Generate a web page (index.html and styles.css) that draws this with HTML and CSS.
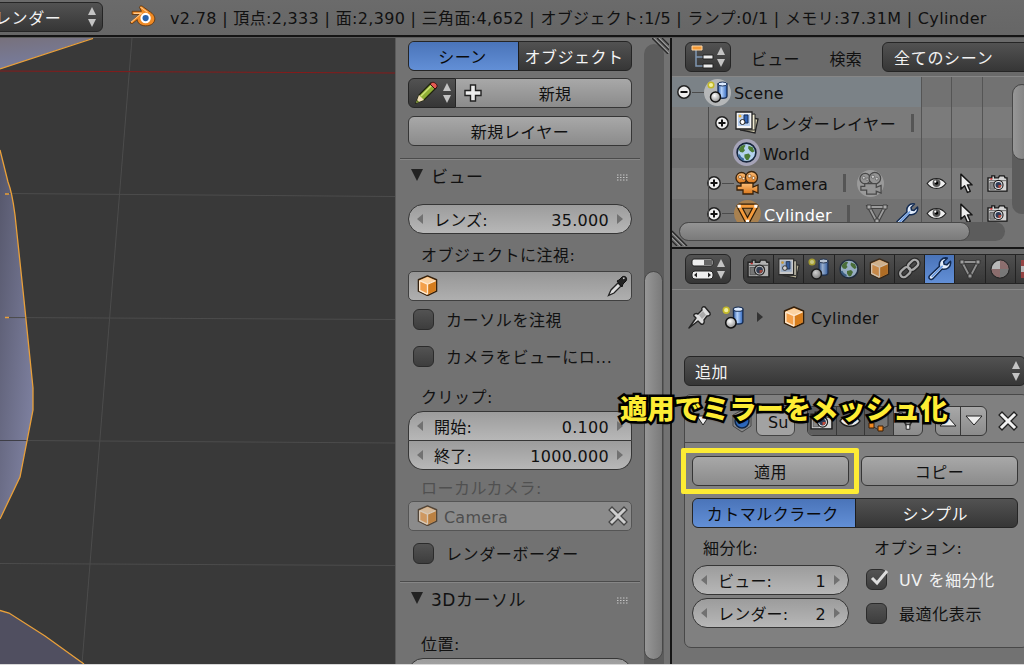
FILE: index.html
```
<!doctype html>
<html lang="ja">
  <head>
    <meta charset="UTF-8" />
    <meta name="viewport" content="width=device-width, initial-scale=1.0" />
    <title>Blender</title>
    <link rel="stylesheet" href="styles.css">
  </head>
  <body>
    <svg class="defs" width="0" height="0">
      <defs>
        <linearGradient id="g-blue" x1="0" x2="1"><stop offset="0" stop-color="#2f5da8" /><stop offset=".4" stop-color="#b4d2fb" /><stop offset="1" stop-color="#2f66bd" /></linearGradient>
        <radialGradient id="g-ball" cx=".4" cy=".35" r=".7"><stop offset="0" stop-color="#fff" /><stop offset="1" stop-color="#8a8a8a" /></radialGradient>
        <linearGradient id="g-orange" x1="0" y1="0" x2="0" y2="1"><stop offset="0" stop-color="#ffc079" /><stop offset="1" stop-color="#d9761a" /></linearGradient>
        <linearGradient id="g-mesh" x1="0" y1="0" x2="1" y2="1"><stop offset="0" stop-color="#55566a" /><stop offset="1" stop-color="#8487a8" /></linearGradient>
        <linearGradient id="g-mesh-top" x1="0" y1="0" x2=".3" y2="1"><stop offset="0" stop-color="#77717c" /><stop offset="1" stop-color="#777da0" /></linearGradient>
      </defs>
      <symbol id="updown" viewBox="0 0 10 20">
        <path d="M5 0 9 8H1zM5 20 1 12h8z" fill="#c4c4c4" />
      </symbol>
      <symbol id="cube" viewBox="0 0 22 22">
        <path d="M11 1 20.500 5v12L11 21.500 1.500 17V5z" fill="#f3a04b" stroke="#33200d" stroke-width="1.500" stroke-linejoin="round" />
        <path d="M11 2.200 19.500 5.700 11 9.500 2.500 5.700z" fill="#fbd3a3" />
        <path d="M11 9.500 19.500 5.700v10.700L11 20.400z" fill="#d57c1c" />
        <path d="M2.800 6 11 9.700V20M11 9.700l8.400-3.800M2.800 6v10.200L11 20.200" fill="none" stroke="#ffe9cf" stroke-width="1.400" />
      </symbol>
      <symbol id="scene" viewBox="0 0 24 24">
        <path d="M12 4v12c0 3 9 3 9 0V4z" fill="url(#g-blue)" stroke="#162c52" stroke-width="1.300" />
        <ellipse cx="16.500" cy="4" rx="4.500" ry="2" fill="#dcebff" stroke="#162c52" />
        <circle cx="9.500" cy="17" r="5" fill="url(#g-ball)" stroke="#111" stroke-width="1.500" />
        <circle cx="5" cy="5" r="2.800" fill="#f2f09a" stroke="#c3b82a" stroke-width="1.500" />
      </symbol>
      <symbol id="layers" viewBox="0 0 26 26">
        <path d="m10 6 14 3-3 14-14-3z" fill="#d9d2b0" stroke="#222" stroke-width="1.300" />
        <path d="m6 5 15-1v16H6z" fill="#eee9cf" stroke="#222" />
        <path d="M2 2h16v17H2z" fill="#f5f5f5" stroke="#222" stroke-width="1.300" />
        <path d="M4 4h12v12H4z" fill="#b9d0f0" />
        <path d="M10 5h4v8h-4z" fill="#2e62b5" stroke="#162c52" />
        <circle cx="8.500" cy="12" r="2.500" fill="#fff" stroke="#222" />
        <circle cx="6" cy="6" r="1.500" fill="#f0b43a" />
      </symbol>
      <symbol id="world" viewBox="0 0 24 24">
        <circle cx="12" cy="12" r="9" fill="#b4d2ee" stroke="#17263c" stroke-width="1.600" />
        <path d="M4.500 9c2-4 6-5 6.500-3.500L9.500 8l1 2-2 2-2.500-.5zM14 5.500l4 1.500 1.500 4-2 1-2.500-2-1.500-2zM10 14l4-1 2 2-2 4-2 .5-2-3z" fill="#4b7b35" />
        <path d="M4.500 14a8 8 0 0 0 5 5" fill="none" stroke="#3b6898" stroke-width="2" />
      </symbol>
      <symbol id="movie" viewBox="0 0 26 26">
        <g stroke="#38220c" stroke-width="1.300" fill="url(#g-orange)">
          <circle cx="7.500" cy="8" r="5.500" /><circle cx="17.500" cy="7.500" r="6" />
          <path d="M7 13h12v4l5-2v8l-5-2v3H9v-4H3v-4h4z" />
        </g>
        <g fill="#fff0dd" stroke="#7a4a1a" stroke-width=".7"><circle cx="6" cy="7" r="1.500" /><circle cx="9.500" cy="8.500" r="1.300" /><circle cx="15.500" cy="6" r="1.700" /><circle cx="19.500" cy="8" r="1.500" /></g>
      </symbol>
      <symbol id="movie-data" viewBox="0 0 26 26">
        <g stroke="#484848" stroke-width="1.300" fill="#949494">
          <circle cx="7.500" cy="8" r="5.500" /><circle cx="17.500" cy="7.500" r="6" />
          <path d="M7 13h12v4l5-2v8l-5-2v3H9v-4H3v-4h4z" />
        </g>
        <g fill="#ccc" stroke="#555" stroke-width=".7"><circle cx="6" cy="7" r="1.500" /><circle cx="9.500" cy="8.500" r="1.300" /><circle cx="15.500" cy="6" r="1.700" /><circle cx="19.500" cy="8" r="1.500" /></g>
      </symbol>
      <symbol id="tri-mesh" viewBox="0 0 24 24">
        <path d="M4 5h16l-8 15z" fill="none" stroke="#2a1a08" stroke-width="5" stroke-linejoin="round" />
        <path d="M4 5h16l-8 15z" fill="none" stroke="#f49a3a" stroke-width="2.800" />
        <path d="M2.500 3.500h3v3h-3zM18.500 3.500h3v3h-3zM10.500 18h3v3h-3z" fill="#fff" />
      </symbol>
      <symbol id="tri-data" viewBox="0 0 24 24">
        <path d="M4 5h16l-8 15z" fill="none" stroke="#333" stroke-width="4" />
        <path d="M4 5h16l-8 15z" fill="none" stroke="#aaa" stroke-width="1.800" />
        <g fill="#bbb" stroke="#333"><path d="M2 3h4v4H2zM18 3h4v4h-4zM10 17h4v4h-4z" /></g>
      </symbol>
      <symbol id="wrench" viewBox="0 0 24 24">
        <path d="M2.500 19 12 10C11 5 14.500 1 19.500 2L16 5.500l.5 2.500 2.500.5L22.500 5c1 5-3 8.500-8 7.500L5.500 22c-2 1.500-5-1-3-3z" fill="#e4eefc" stroke="#132b52" stroke-width="1.500" stroke-linejoin="round" />
        <path d="M4.500 20 15 9.500" stroke="#6a9be4" stroke-width="1.600" />
      </symbol>
      <symbol id="eye" viewBox="0 0 22 16">
        <path d="M1 8C6 1 16 1 21 8c-5 7-15 7-20 0z" fill="#eee" stroke="#222" stroke-width="1.300" />
        <circle cx="11" cy="7.500" r="4.200" fill="#555" /><circle cx="11" cy="7.500" r="1.900" fill="#000" /><circle cx="9.700" cy="6" r="1.200" fill="#fff" />
      </symbol>
      <symbol id="cursor" viewBox="0 0 16 22">
        <path d="M2 1v16l4-3.500L9 20.500l3-1.200-3-6.800h5z" fill="#ededed" stroke="#151515" stroke-width="1.500" stroke-linejoin="round" />
      </symbol>
      <symbol id="camera" viewBox="0 0 22 20">
        <path d="M1 4h4V2h3v2h4l1-2h5l1 2h2v14H1z" fill="#d5d5d5" stroke="#1a1a1a" stroke-width="1.400" />
        <path d="M2 7h18M3 9h5v7H3z" fill="#888" stroke="#666" />
        <circle cx="12" cy="11.500" r="4.800" fill="#eee" stroke="#1a1a1a" stroke-width="1.200" />
        <circle cx="12" cy="11.500" r="3.200" fill="#2e3b55" /><path d="M12 11.500h3a3 3 0 0 1-3 3z" fill="#c14a3b" />
        <path d="M3.500 5.200h2" stroke="#d22" stroke-width="1.500" />
      </symbol>
      <symbol id="chain" viewBox="0 0 24 24">
        <g fill="none" stroke="#222" stroke-width="4.600"><rect x="10" y="5" width="11" height="7" rx="3.500" transform="rotate(-42 15.500 8.500)" /><rect x="2.500" y="12" width="11" height="7" rx="3.500" transform="rotate(-42 8 15.500)" /></g>
        <g fill="none" stroke="#ccc" stroke-width="2.200"><rect x="10" y="5" width="11" height="7" rx="3.500" transform="rotate(-42 15.500 8.500)" /><rect x="2.500" y="12" width="11" height="7" rx="3.500" transform="rotate(-42 8 15.500)" /></g>
      </symbol>
      <symbol id="material" viewBox="0 0 24 24">
        <circle cx="12" cy="12" r="9" fill="#ddd" stroke="#222" stroke-width="1.400" />
        <path d="M12 12V3.500a8.500 8.500 0 0 1 8.500 8.500zM12 12v8.500A8.500 8.500 0 0 1 3.500 12z" fill="#a47c7c" />
        <path d="M12 12h8.500a8.500 8.500 0 0 1-8.500 8.500z" fill="#8a8a8a" />
      </symbol>
      <symbol id="cross" viewBox="0 0 20 20">
        <path d="m4 4 12 12M16 4 4 16" stroke="#222" stroke-width="5.500" stroke-linecap="square" />
        <path d="m4 4 12 12M16 4 4 16" stroke="#f2f2f2" stroke-width="3" stroke-linecap="square" />
      </symbol>
      <symbol id="expand" viewBox="0 0 16 16">
        <circle cx="8" cy="8" r="6.200" fill="#eee" stroke="#222" stroke-width="1.500" />
        <path d="M4.500 8h7M8 4.500v7" stroke="#111" stroke-width="2" />
      </symbol>
      <symbol id="grip" viewBox="0 0 17 16">
        <path d="M0 0 16 16M5 0l12 12M10 0l7 7" stroke="#282828" stroke-width="1.300" />
        <path d="m2 0 15 15M7 0l10 10" stroke="#999" />
      </symbol>
      <symbol id="dots" viewBox="0 0 12 7">
        <path d="M0 1h12M0 3.500h12M0 6h12" stroke="#c5c5c5" stroke-width="1" stroke-dasharray="1.500 1.500" />
      </symbol>
    </svg>

    <div class="window">
      <header class="topbar">
        <div class="engine dark">
          <span>レンダー</span>
          <svg class="updown"><use href="#updown" /></svg>
        </div>
        <svg class="logo" viewBox="0 0 26 22">
          <path d="M1 17 10 9H3V6h9l-2-4c1-2 3-1 4 0l7 5c7 5 4 13-5 13-5 0-8-3-8-6l-5 4z" fill="#f08a24" stroke="#5b320c" stroke-width=".8" />
          <path d="M2 16.500 12 8H4.500M11 2l7 5" fill="none" stroke="#ffc98b" />
          <circle cx="16" cy="12.500" r="5" fill="#fff" /><circle cx="16" cy="12.500" r="3" fill="#2861ab" />
        </svg>
        <span class="stats">v2.78 | 頂点:2,333 | 面:2,390 | 三角面:4,652 | オブジェクト:1/5 | ランプ:0/1 | メモリ:37.31M | Cylinder</span>
      </header>

      <main class="areas">
        <svg class="viewport" viewBox="0 38 395 626">
          <path d="M0 38h93L0 69z" fill="url(#g-mesh-top)" />
          <path d="M0 150 8 182Q12 192 15 215L24 300 33 388V410L20 477 0 519z" fill="url(#g-mesh)" />
          <path d="M0 610.500 9 613 45 636 84 664H0z" fill="#504f60" />
          <g fill="none" stroke="#4c4c4c">
            <path d="M132 38 82 664M7 193.500 395 196.500M5 317.500 395 319.500M24 440.500 395 443M0 563.500 395 565.500" />
            <path d="M0 440.500H28" stroke="#3e3e46" />
          </g>
          <path d="M0 71 395 73" stroke="#861b1b" />
          <path d="M93 38.500 0 69M0 150 8 182Q12 192 15 215L24 300 33 388V410L20 477 0 519M0 610.500 9 613 45 636 84 664M5 317.500h4M5 194h4" fill="none" stroke="#e9a03a" stroke-width="1.300" />
        </svg>

        <aside class="sidebar">
          <div class="panels">
            <div class="seg">
              <span class="on seg-scene">シーン</span>
              <span class="seg-object">オブジェクト</span>
            </div>
            <div class="btn-row">
              <span class="pencil dark">
                <svg width="26" height="26" viewBox="0 0 26 26">
                  <path d="M3 23 6 15 18 3l5 5L11 20z" fill="#8fae35" stroke="#20240e" stroke-width="1.300" />
                  <path d="m3 23 3-8 5 5z" fill="#f0dfb6" /><path d="m3 23 1.200-3 2 2z" fill="#5c7a18" />
                  <path d="m8 16 11-11" stroke="#cfe276" stroke-width="1.500" />
                  <path d="m17 4 2-1.500c2-1 6 2 5 4.500l-2 2z" fill="#e55b52" stroke="#3a1010" />
                </svg>
                <svg class="updown"><use href="#updown" /></svg>
              </span>
              <span class="new light">
                <svg width="20" height="20" viewBox="0 0 20 20"><path d="M7.500 2h5v5.500H18v5h-5.500V18h-5v-5.500H2v-5h5.500z" fill="#eee" stroke="#222" stroke-width="1.400" /></svg>
                <span>新規</span>
              </span>
            </div>
            <div class="btn light">新規レイヤー</div>

            <div class="panel-head first"><i></i><h2>ビュー</h2><svg><use href="#dots" /></svg></div>
            <div class="num lens"><span>レンズ:</span><b>35.000</b></div>
            <div class="label">オブジェクトに注視:</div>
            <div class="field">
              <svg width="21" height="21"><use href="#cube" /></svg>
              <span></span>
              <svg width="21" height="22" viewBox="0 0 21 22">
                <path d="M1.500 20.500 4 15 11 8l3 3-7 7z" fill="#ddd" stroke="#222" stroke-width="1.300" />
                <path d="m10 6 2-1 3-3c3-2 6 1 4 4l-3 3-1 3z" fill="#222" stroke="#111" /><path d="m16 3.500 1.500-.5" stroke="#ccc" stroke-width="1.500" />
              </svg>
            </div>
            <div class="check c1"><i></i>カーソルを注視</div>
            <div class="check c2"><i></i>カメラをビューにロ...</div>
            <div class="label clip">クリップ:</div>
            <div class="num top"><span>開始:</span><b>0.100</b></div>
            <div class="num bottom"><span>終了:</span><b>1000.000</b></div>
            <div class="label local">ローカルカメラ:</div>
            <div class="field disabled">
              <svg width="21" height="21"><use href="#cube" /></svg>
              <span>Camera</span>
              <svg width="20" height="20"><use href="#cross" /></svg>
            </div>
            <div class="check c3"><i></i>レンダーボーダー</div>

            <div class="panel-head second"><i></i><h2>3Dカーソル</h2><svg><use href="#dots" /></svg></div>
            <div class="label pos">位置:</div>
            <div class="num cut"></div>
          </div>
          <div class="vscroll"><div class="vthumb"></div></div>
          <svg class="grip"><use href="#grip" /></svg>
        </aside>

        <div class="editors">
          <section class="outliner">
            <div class="out-head">
              <span class="editor-type dark">
                <svg width="24" height="24" viewBox="0 0 24 24">
                  <path d="M5 4v17h7M5 12h7" fill="none" stroke="#7f97b3" stroke-width="1.500" />
                  <path d="M1 1h10v4H1z" fill="#f49b38" stroke="#ffd7a6" /><path d="M12 10h10v4H12zM12 19h10v4H12z" fill="#eee" stroke="#222" />
                </svg>
                <svg class="updown"><use href="#updown" /></svg>
              </span>
              <span class="menu-view">ビュー</span>
              <span class="menu-search">検索</span>
              <span class="display dark">全てのシーン</span>
            </div>
            <div class="tree-wrap">
              <div class="tree">
                <div class="row sel">
                  <div class="name n0">
                    <svg width="16" height="16" viewBox="0 0 16 16"><circle cx="8" cy="8" r="6.200" fill="#eee" stroke="#222" stroke-width="1.500" /><path d="M4.500 8h7" stroke="#111" stroke-width="2" /></svg>
                    <hr /><span class="disc pale"><svg width="24" height="24"><use href="#scene" /></svg></span><span class="nm">Scene</span>
                  </div>
                  <i></i><i></i><i></i>
                </div>
                <div class="row alt">
                  <div class="name n1">
                    <svg width="16" height="16"><use href="#expand" /></svg>
                    <svg class="lay" width="26" height="26"><use href="#layers" /></svg><span class="nm wide">レンダーレイヤー</span><em></em>
                  </div>
                  <i></i><i></i><i></i>
                </div>
                <div class="row">
                  <div class="name n2">
                    <span class="disc lilac"><svg width="25" height="25"><use href="#world" /></svg></span><span class="nm">World</span>
                  </div>
                  <i></i><i></i><i></i>
                </div>
                <div class="row alt">
                  <div class="name n3">
                    <svg width="16" height="16"><use href="#expand" /></svg>
                    <hr /><svg class="obj" width="26" height="26"><use href="#movie" /></svg><span class="nm">Camera</span><em></em>
                    <span class="disc gray"><svg width="25" height="25"><use href="#movie-data" /></svg></span>
                  </div>
                  <i><svg width="21" height="15"><use href="#eye" /></svg></i><i><svg width="15" height="21"><use href="#cursor" /></svg></i><i><svg width="21" height="19"><use href="#camera" /></svg></i>
                </div>
                <div class="row last">
                  <div class="name n3">
                    <svg width="16" height="16"><use href="#expand" /></svg>
                    <hr /><span class="disc amber"><svg width="25" height="25"><use href="#tri-mesh" /></svg></span><span class="nm active">Cylinder</span><em></em>
                    <svg class="data" width="24" height="24"><use href="#tri-data" /></svg><svg class="mod" width="24" height="24"><use href="#wrench" /></svg>
                  </div>
                  <i><svg width="21" height="15"><use href="#eye" /></svg></i><i><svg width="15" height="21"><use href="#cursor" /></svg></i><i><svg width="21" height="19"><use href="#camera" /></svg></i>
                </div>
              </div>
              <div class="out-vscroll"><div></div></div>
            </div>
            <div class="hscroll"><div></div></div>
            <svg class="grip-left" viewBox="0 0 17 20"><path d="m0 5 15 15M0 10l10 10M0 15l5 5" stroke="#282828" stroke-width="1.300" /><path d="m0 7 13 13M0 12l8 8" stroke="#999" /></svg>
          </section>

          <section class="props">
            <div class="props-head">
              <span class="editor-type dark">
                <svg width="24" height="24" viewBox="0 0 24 24">
                  <rect x="1" y="2" width="21" height="7" rx="2" fill="#eee" stroke="#222" /><path d="M13 3h8v5h-8z" fill="#666" />
                  <rect x="1" y="14" width="21" height="8" rx="3" fill="#eee" stroke="#222" /><path d="m6 15.500-3 2.500 3 2.500zM17 15.500l3 2.500-3 2.500z" fill="#222" />
                </svg>
                <svg class="updown"><use href="#updown" /></svg>
              </span>
              <div class="tabs">
                <span><svg width="23" height="21"><use href="#camera" /></svg></span>
                <span><svg width="24" height="24"><use href="#layers" /></svg></span>
                <span><svg width="24" height="24"><use href="#scene" /></svg></span>
                <span><svg width="24" height="24"><use href="#world" /></svg></span>
                <span><svg width="21" height="21"><use href="#cube" /></svg></span>
                <span><svg width="25" height="25"><use href="#chain" /></svg></span>
                <span class="on"><svg width="25" height="25"><use href="#wrench" /></svg></span>
                <span><svg width="24" height="24"><use href="#tri-data" /></svg></span>
                <span><svg width="24" height="24"><use href="#material" /></svg></span>
                <span><svg width="24" height="24" viewBox="0 0 24 24"><path d="M3 3h18v18H3z" fill="#ddd" /><path d="M3 3h6v6H3zM9 9h6v6H9zM3 15h6v6H3z" fill="#b04343" /></svg></span>
              </div>
            </div>
            <div class="crumbs">
              <svg width="25" height="25" viewBox="0 0 25 25">
                <path d="m2 23 7-10-2-2c-1-2 2-3 4-2l4-4c-1-2 1-4 3-3l5 6c1 2-1 3-3 3l-3 4c1 3-1 5-3 4l-3-3z" fill="#ddd" stroke="#222" stroke-width="1.400" stroke-linejoin="round" /><path d="m12 10 4-4 3 4-4 4z" fill="#aaa" />
              </svg>
              <svg class="crumb-scene" width="25" height="25"><use href="#scene" /></svg>
              <b></b>
              <svg width="22" height="22"><use href="#cube" /></svg>
              <span>Cylinder</span>
            </div>
            <div class="add dark"><span>追加</span><svg class="updown"><use href="#updown" /></svg></div>

            <div class="modifier">
              <div class="mod-head">
                <svg class="fold" width="16" height="12" viewBox="0 0 16 12"><path d="M2 1h12L8 10z" fill="#eee" stroke="#222" /></svg>
                <svg class="subsurf" width="22" height="24" viewBox="0 0 22 24"><path d="m11 1 9 5v11l-9 6-9-6V6z" fill="#888" stroke="#444" /><circle cx="11" cy="12" r="7" fill="#2d67bb" stroke="#112543" stroke-width="1.500" /><path d="M7 9c2-3 6-3 8 0" stroke="#b8d8ff" stroke-width="2" fill="none" /></svg>
                <span class="mod-name">Su</span>
                <div class="toggles">
                  <span class="down"><svg width="23" height="21"><use href="#camera" /></svg></span>
                  <span class="down"><svg width="22" height="16"><use href="#eye" /></svg></span>
                  <span class="down"><svg width="22" height="22" viewBox="0 0 22 22"><path d="m11 3 9-1v14l-9 4-9-5V3z" fill="#777" stroke="#333" /><path d="M1 13h5v5H1zM10 16h5v5h-5z" fill="#f28a22" stroke="#3a1e06" /></svg></span>
                  <span><svg width="22" height="22" viewBox="0 0 24 24"><path d="M4 5h16l-8 15z" fill="none" stroke="#333" stroke-width="2" /><path d="M10 16h4v5h-4zM2 3h4v4H2zM18 3h4v4h-4z" fill="#eee" stroke="#222" /></svg></span>
                </div>
                <div class="move">
                  <span><svg width="18" height="12" viewBox="0 0 18 12"><path d="M1 11h16L9 2z" fill="#eee" stroke="#222" /></svg></span>
                  <span><svg width="18" height="12" viewBox="0 0 18 12"><path d="M1 1h16l-8 9z" fill="#eee" stroke="#222" /></svg></span>
                </div>
                <svg class="close" width="20" height="20"><use href="#cross" /></svg>
              </div>
              <div class="mod-body">
                <div class="actions"><div class="btn light">適用</div><div class="btn light">コピー</div></div>
                <div class="seg"><span class="on">カトマルクラーク</span><span>シンプル</span></div>
                <div class="options">
                  <div>
                    <div class="opt-label">細分化:</div>
                    <div class="num"><span>ビュー:</span><b>1</b></div>
                    <div class="num"><span>レンダー:</span><b>2</b></div>
                  </div>
                  <div>
                    <div class="opt-label">オプション:</div>
                    <div class="check checked"><i><svg width="24" height="20" viewBox="0 0 24 20"><path d="m5 8 5 5L20 1" fill="none" stroke="#ddd" stroke-width="3" /></svg></i>UV を細分化</div>
                    <div class="check"><i></i>最適化表示</div>
                  </div>
                </div>
              </div>
            </div>
          </section>
        </div>
      </main>
      <div class="highlight"></div>
      <div class="caption">適用でミラーをメッシュ化</div>
    </div>
  </body>
</html>
```
FILE: styles.css
```
* {
  box-sizing: border-box;
}

body {
  margin: 0;
  background: #d8d8d8;
  color: #111;
  font: 16px/1 "DejaVu Sans", "Noto Sans CJK JP", sans-serif;
  letter-spacing: 0.2px;
  overflow: hidden;
}

svg {
  flex: none;
  display: block;
}

i, b, em {
  font-style: normal;
  font-weight: normal;
}

.defs {
  position: absolute;
}

.window {
  position: relative;
  width: 1024px;
  height: 664px;
  overflow: hidden;
  display: flex;
  flex-direction: column;
  white-space: nowrap;
}

/* shared widgets */
.dark {
  background: linear-gradient(#525252, #363636);
  border: 1px solid #252525;
  border-radius: 6px;
  color: #f2f2f2;
  display: flex;
  align-items: center;
  height: 30px;
}

.light,
.btn {
  background: linear-gradient(#a8a8a8, #8b8b8b);
  border: 1px solid #363636;
  border-radius: 6px;
  height: 30px;
}

.btn {
  display: flex;
  align-items: center;
  justify-content: center;
  padding-top: 4px;
  letter-spacing: 0.5px;
}

.updown {
  width: 10px;
  height: 20px;
}

.seg {
  display: flex;
  height: 30px;
  border: 1px solid #252525;
  border-radius: 6px;
  overflow: hidden;
  background: linear-gradient(#525252, #363636);
  color: #f5f5f5;
  letter-spacing: 0.5px;
}

.seg span {
  flex: 1;
  display: flex;
  align-items: center;
  justify-content: center;
  padding: 4px 2px 0 0;
}

.seg .on {
  background: linear-gradient(#4a74b9, #628fd6);
  color: #0a0a0a;
  border-right: 1px solid #1c1c1c;
}

.num {
  display: flex;
  align-items: center;
  justify-content: space-between;
  height: 30px;
  padding: 3px 8px 0;
  border: 1px solid #363636;
  border-radius: 15px;
  background: linear-gradient(#9c9c9c, #b7b7b7);
}

.num::before,
.num::after {
  content: "";
  border: 5px solid transparent;
  border-left-width: 0;
  border-right: 6px solid #717171;
  margin-top: -4px;
}

.num::after {
  border-right-width: 0;
  border-left: 6px solid #717171;
}

.num span {
  flex: 1;
  margin-left: 11px;
}

.num b {
  margin-right: 8px;
  letter-spacing: 0.3px;
}

.check {
  display: flex;
  align-items: center;
  height: 22px;
  letter-spacing: 0.6px;
  padding-top: 2px;
}

.check i {
  width: 21px;
  height: 21px;
  margin: -4px 12px 0 0;
  border: 1px solid #2b2b2b;
  border-radius: 6px;
  background: linear-gradient(#535353, #3d3d3d);
}

.checked {
  color: #f2f2f2;
}

.topbar {
  display: flex;
  align-items: center;
  flex: none;
  height: 38px;
  padding-bottom: 3px;
  background: linear-gradient(#6b6b6b, #666 35px, #141414 35px, #141414 37px, #5a5a5a 37px);
}

.engine {
  width: 109px;
  margin: 0 26px 2px -6px;
  padding-right: 5px;
  justify-content: space-between;
}

.engine span {
  padding-top: 4px;
  letter-spacing: 0.6px;
}

.logo {
  width: 27px;
  height: 23px;
  margin: 0 14px 2px 0;
}

.stats {
  padding-top: 3px;
  letter-spacing: 0.33px;
}

.areas {
  flex: 1;
  display: flex;
  min-height: 0;
}

.viewport {
  width: 395px;
  height: 626px;
  background: #393939;
}

/* 3D view properties region */
.sidebar {
  position: relative;
  display: flex;
  width: 275px;
  background: #727272;
  border-left: 1px solid #5a5a5a;
  overflow: hidden;
}

.panels {
  width: 244px;
  padding: 3px 8px 0 12px;
}

.btn-row {
  display: flex;
  margin: 7px 0 8px;
}

.seg .seg-scene {
  flex: 0 0 110px;
}

.pencil {
  width: 48px;
  padding: 0 3px 0 4px;
  justify-content: space-between;
  border-radius: 6px 0 0 6px;
}

.new {
  flex: 1;
  display: flex;
  align-items: center;
  border-left: 0;
  border-radius: 0 6px 6px 0;
  padding-left: 7px;
}

.new span {
  flex: 1;
  text-align: center;
  padding: 4px 14px 0 10px;
}

.panel-head {
  display: flex;
  align-items: center;
  height: 34px;
  margin: 12px -8px 0;
  padding: 3px 11px 0 11px;
  border-top: 1px solid #4b4b4b;
  box-shadow: inset 0 1px #868686;
}

.panel-head h2 {
  flex: 1;
  margin: 0 0 0 8px;
  font-size: 17px;
  font-weight: normal;
  letter-spacing: 0.5px;
}

.panel-head i {
  margin-top: -4px;
  border: 6px solid transparent;
  border-top: 12px solid #222;
  border-bottom: 0;
}

.panel-head svg {
  width: 12px;
  height: 7px;
}

.lens {
  margin-top: 12px;
}

.label {
  height: 37px;
  padding: 14px 0 0 13px;
  letter-spacing: 0.5px;
}

.field {
  display: flex;
  align-items: center;
  height: 30px;
  padding: 0 3px 1px 8px;
  border: 1px solid #404040;
  border-radius: 5px;
  background: linear-gradient(#969696, #afafaf);
}

.field span {
  flex: 1;
  padding: 5px 0 0 6px;
}

.disabled {
  color: #4e4e4e;
  background: #8b8b8b;
  border-color: #555;
}

.disabled svg {
  opacity: 0.65;
}

.c1,
.c2,
.c3 {
  margin: 8px 0 0 5px;
}

.c2 {
  margin-top: 15px;
}

.c3 {
  margin-top: 12px;
}

.clip {
  height: 43px;
  padding-top: 22px;
}

.top {
  border-radius: 15px 15px 0 0;
}

.bottom {
  border-radius: 0 0 15px 15px;
  border-top: 0;
  height: 29px;
}

.local {
  height: 31px;
  padding-top: 11px;
  color: #505050;
}

.second {
  margin-top: 16px;
}

.pos {
  height: 43px;
  padding-top: 22px;
}

.vscroll {
  width: 20px;
  height: 640px;
  margin: 6px 0 0 4px;
  padding-top: 227px;
  border-radius: 10px 10px 0 0;
  background: #5c5c5c;
}

.vthumb {
  width: 19px;
  height: 389px;
  border: 1px solid #484848;
  border-radius: 10px;
  background: linear-gradient(90deg, #979797, #7a7a7a);
}

.grip {
  position: absolute;
  top: 0;
  right: 1px;
  width: 17px;
  height: 16px;
}

.editors {
  display: flex;
  flex-direction: column;
  width: 354px;
  border-left: 2px solid #151515;
  background: #727272;
}

.outliner {
  position: relative;
  height: 211px;
  flex: none;
  border-bottom: 2px solid #151515;
  overflow: hidden;
}

.out-head,
.props-head {
  display: flex;
  align-items: center;
  height: 39px;
  padding-left: 13px;
  border-bottom: 1px solid #878787;
  background: #6a6a6a;
  overflow: hidden;
}

.editor-type {
  flex: none;
  width: 46px;
  padding: 0 4px 0 5px;
  justify-content: space-between;
}

.menu-view {
  margin: 5px 0 0 20px;
}

.menu-search {
  margin: 5px 0 0 30px;
}

.display {
  flex: none;
  width: 160px;
  margin-left: 20px;
  padding: 4px 0 0 11px;
  letter-spacing: 0.7px;
}

.tree-wrap {
  display: flex;
  height: 145px;
}

.tree {
  position: relative;
  flex: none;
  width: 340px;
  height: 145px;
  overflow: hidden;
}

.tree::before {
  content: "";
  position: absolute;
  left: 36px;
  top: 30px;
  height: 115px;
  border-left: 1px solid #4c4c4c;
}

.row {
  display: flex;
  height: 30.4px;
}

.alt {
  background: #7b7b7b;
}

.row > i {
  flex: none;
  width: 30.3px;
  border-left: 1px solid #555;
  display: flex;
  align-items: center;
  justify-content: center;
}

.name {
  flex: none;
  display: flex;
  align-items: center;
  width: 249px;
}

.sel .name {
  background: #7b8287;
}

.nm {
  padding-top: 4px;
}

.wide {
  letter-spacing: 0.6px;
}

.active {
  color: #fff;
}

.n0 {
  padding-left: 4px;
}

.n1 {
  padding-left: 42px;
}

.n2 {
  padding-left: 61px;
}

.n3 {
  padding-left: 34px;
}

.name hr {
  width: 12px;
  margin: 0;
  border: 0;
  border-top: 1px solid #4c4c4c;
}

.name em {
  width: 3px;
  height: 18px;
  margin-left: 15px;
  background: #555;
}

.disc {
  flex: none;
  display: flex;
  align-items: center;
  justify-content: center;
  width: 27px;
  height: 27px;
  margin-right: 3px;
  border-radius: 50%;
}

.pale {
  background: #b5b7b8;
}

.lilac {
  background: #a5a3b7;
}

.amber {
  background: #a9814f;
}

.gray {
  margin-left: 11px;
  background: #9a9a9a;
}

.lay {
  margin: 0 4px 0 4px;
}

.obj {
  margin-right: 4px;
}

.data {
  margin: 0 6px 0 15px;
  opacity: 0.75;
}

.out-vscroll {
  width: 20px;
  height: 130px;
  margin-top: 7px;
  border-radius: 10px;
  background: #5c5c5c;
  flex: none;
}

.out-vscroll div {
  height: 76px;
  border: 1px solid #484848;
  border-radius: 10px;
  background: linear-gradient(90deg, #979797, #7a7a7a);
}

.hscroll {
  position: relative;
  width: 326px;
  height: 19px;
  margin-left: 7px;
  border-radius: 10px;
  background: #5c5c5c;
}

.hscroll div {
  width: 291px;
  height: 19px;
  border: 1px solid #484848;
  border-radius: 10px;
  background: linear-gradient(#949494, #7a7a7a);
}

.grip-left {
  position: absolute;
  left: 0;
  bottom: 1px;
  width: 17px;
  height: 20px;
}

/* properties editor */
.props {
  flex: 1;
  overflow: hidden;
}

.props-head {
  height: 41px;
  padding-bottom: 1px;
}

.tabs {
  display: flex;
  flex: none;
  margin-left: 12px;
  height: 30px;
  border: 1px solid #252525;
  border-radius: 7px 0 0 7px;
  background: linear-gradient(#505050, #383838);
  overflow: hidden;
}

.tabs span {
  display: flex;
  align-items: center;
  justify-content: center;
  width: 30.2px;
  border-right: 1px solid #222;
}

.tabs svg {
  opacity: 0.75;
}

.tabs .on {
  background: linear-gradient(#4a74b9, #628fd6);
}

.tabs .on svg {
  opacity: 1;
}

.crumbs {
  display: flex;
  align-items: center;
  height: 54px;
  padding-left: 15px;
}

.crumb-scene {
  margin-left: 9px;
}

.crumbs b {
  margin: 0 20px 0 11px;
  border: 5px solid transparent;
  border-left: 6px solid #333;
  border-right: 0;
}

.crumbs span {
  padding: 3px 0 0 6px;
}

.add {
  width: 342px;
  margin: 12px 0 8px 12px;
  padding: 0 4px 0 10px;
  justify-content: space-between;
}

.add span {
  padding-top: 4px;
  letter-spacing: 0.5px;
}

.modifier {
  width: 345px;
  height: 254px;
  margin-left: 12px;
  border: 1px solid #484848;
  border-radius: 7px;
  background: #808080;
}

.mod-head {
  display: flex;
  align-items: center;
  height: 48px;
  padding: 4px 0 0 10px;
  border-bottom: 1px solid #484848;
}

.subsurf {
  margin-left: 20px;
}

.mod-name {
  width: 39px;
  height: 30px;
  margin-left: 3px;
  padding: 8px 0 0 11px;
  border: 1px solid #444;
  border-radius: 6px;
  background: #a2a2a2;
}

.toggles,
.move {
  display: flex;
  height: 30px;
  margin-left: 12px;
  border: 1px solid #383838;
  border-radius: 6px;
  overflow: hidden;
  background: linear-gradient(#a8a8a8, #8b8b8b);
}

.toggles span,
.move span {
  display: flex;
  align-items: center;
  justify-content: center;
  width: 25px;
  border-right: 1px solid #383838;
}

.toggles span {
  width: 28.5px;
}

.toggles .down {
  background: #5e5e5e;
}

.toggles span:last-child,
.move span:last-child {
  border-right: 0;
}

.close {
  margin-left: 11px;
}

.mod-body {
  width: 334px;
  padding: 13px 0 0 7px;
}

.actions {
  display: grid;
  grid-template-columns: 157px 157px;
  gap: 12px;
  margin-bottom: 12px;
}

.mod-body .seg {
  width: 326px;
}

.options {
  display: grid;
  grid-template-columns: 157px 1fr;
  gap: 17px;
}

.opt-label {
  height: 37px;
  padding: 13px 0 0 11px;
  letter-spacing: 0.5px;
}

.options > div:last-child .opt-label {
  padding-left: 8px;
}

.options .num {
  margin-bottom: 3px;
}

.options .check {
  height: 30px;
  margin-bottom: 4px;
}

/* annotations */
.highlight {
  position: absolute;
  left: 681px;
  top: 448px;
  width: 178px;
  height: 46px;
  border: 5px solid #fdec34;
  border-radius: 2px;
}

.caption {
  position: absolute;
  left: 620px;
  top: 394px;
  color: #fdec34;
  font: 900 27.3px/1 "Noto Sans CJK JP", sans-serif;
  letter-spacing: 0;
  -webkit-text-stroke: 5px #000;
  paint-order: stroke fill;
  text-shadow: 0 1px 3px #000;
}
```
